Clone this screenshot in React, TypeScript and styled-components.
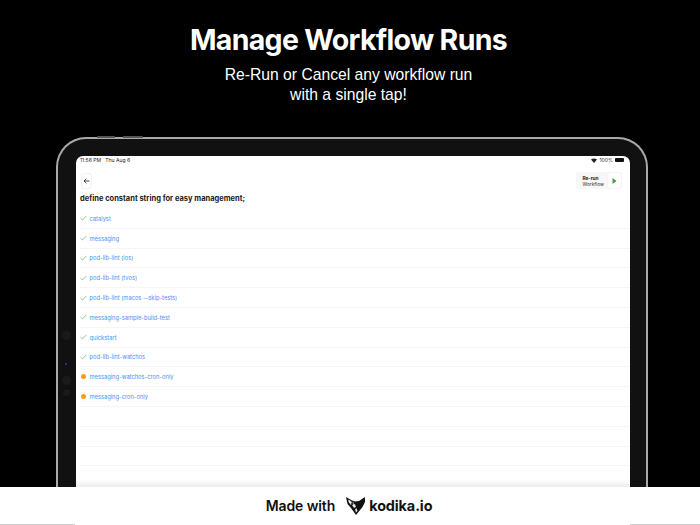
import React from "react";
import styled, { createGlobalStyle } from "styled-components";

const Global = createGlobalStyle`
  html, body { margin: 0; padding: 0; background: #000; }
  body { width: 700px; height: 525px; overflow: hidden; font-family: Inter, "Liberation Sans", sans-serif; }
`;
const Page = styled.div`
  width: 700px; height: 525px; display: flex; flex-direction: column; overflow: hidden;
`;
const Stage = styled.section`
  flex: 0 0 487px; height: 487px; background: #000; display: flex; flex-direction: column; align-items: center; overflow: hidden;
`;
const Headline = styled.h1`
  margin: 22px 3px 0 0; font: 700 28.5px/36px Inter, "Liberation Sans", sans-serif; color: #fff; letter-spacing: -0.67px;
`;
const Sub = styled.p`
  margin: 7px 3px 0 0; font: 400 15.7px/19.5px "Liberation Sans", Arial, sans-serif; color: #fff; text-align: center;
`;
const Device = styled.div`
  position: relative; margin: 33px 0 0 4px; width: 592px; flex: 1; min-height: 0; box-sizing: border-box;
  background: #111; border: solid #a9a9a9; border-width: 2px 2px 0; border-radius: 30px 30px 0 0;
  padding: 17px 16px 0 18px; display: flex;
`;
const SideButton = styled.span<{ $left: number; $width: number }>`
  position: absolute; top: -3px; left: ${p => p.$left}px; width: ${p => p.$width}px; height: 2px;
  background: #555; border-radius: 1px 1px 0 0;
`;
const Dot = styled.span<{ $top: number; $size: number; $color: string }>`
  position: absolute; left: ${p => 7 - p.$size / 2 + 1}px; top: ${p => p.$top}px; width: ${p => p.$size}px; height: ${p => p.$size}px;
  border-radius: 50%; background: ${p => p.$color};
`;
const Screen = styled.div`
  flex: 1; min-width: 0; background: #fff; border-radius: 7px 7px 0 0; display: flex; flex-direction: column; overflow: hidden; position: relative;
`;
const StatusBar = styled.div`
  display: flex; justify-content: space-between; align-items: center; height: 8px; padding: 0 6px 0 4px;
  font: 400 5.1px/8px Inter, "Liberation Sans", sans-serif; color: #222;
`;
const StatusGroup = styled.div`
  display: flex; align-items: center; gap: 2px;
  &:first-child { gap: 4px; }
`;
const Battery = styled.span`
  display: inline-block; width: 9px; height: 4px; background: #111; border-radius: 1px;
`;
const Toolbar = styled.div`
  display: flex; justify-content: space-between; align-items: center; padding: 8px 8px 0 5px;
`;
const BackButton = styled.button`
  width: 11px; height: 16px; padding: 0; border: 1px solid #f2f2f2; border-radius: 3px; background: #fff;
  display: flex; align-items: center; justify-content: center;
`;
const RerunGroup = styled.div`
  display: flex; align-items: center; height: 17px; background: #f7f7f7; border-radius: 3px; padding: 0 1px 0 6px; gap: 4px;
`;
const RerunLabel = styled.div`
  font: 400 4.8px/6px Inter, "Liberation Sans", sans-serif; color: #333;
  b { display: block; font-weight: 700; color: #222; }
`;
const PlayButton = styled.span`
  width: 13px; height: 15px; background: #fff; border-radius: 3px; box-shadow: 0 0 2px #0000000d; display: flex; align-items: center; justify-content: center;
`;
const Title = styled.h2`
  margin: 4px 0 0; padding-left: 4px; font: 700 7.5px/12px Inter, "Liberation Sans", sans-serif; color: #1a1a1a;
`;
const List = styled.ul`
  list-style: none; margin: 4px 0 0; padding: 0;
`;
const Row = styled.li`
  height: 19.8px; box-sizing: border-box; margin-left: 4px; border-bottom: 1px solid #f5f5f5;
  display: flex; align-items: center; gap: 2.5px;
`;
const StatusSlot = styled.span`
  width: 7px; display: flex; justify-content: center; flex: none;
`;
const Pending = styled.span`
  width: 5px; height: 5px; border-radius: 50%; background: #fb9b14;
`;
const JobName = styled.a`
  font: 400 5.75px/9px Inter, "Liberation Sans", sans-serif; color: #4d8df5;
`;
const Fade = styled.div`
  position: absolute; left: 0; right: 0; bottom: 0; height: 8px; background: linear-gradient(#fff0, #eee);
`;
const Footer = styled.footer`
  flex: 1; background: #fff; display: flex; align-items: center; justify-content: center; gap: 11px; padding-right: 2px; position: relative;
`;
const Made = styled.span`
  font: 600 14px/18px Inter, "Liberation Sans", sans-serif; color: #111; letter-spacing: -0.1px;
`;
const Brand = styled.span`
  display: flex; align-items: center; gap: 3px; font: 700 14.4px/18px Inter, "Liberation Sans", sans-serif; color: #111; letter-spacing: -0.1px;
`;
const EdgeMark = styled.span<{ $side: "left" | "right"; $width: number }>`
  position: absolute; bottom: 0; ${p => p.$side}: 0; width: ${p => p.$width}px; height: 1px; background: #ccc;
`;

const Check = () => (
  <svg width="7" height="6" viewBox="0 0 7 6" fill="none"><path d="M.6 3.2 2.500 5 6.400.8" stroke="#7fb27f" strokeWidth=".8" /></svg>
);
const Back = () => (
  <svg width="7" height="6" viewBox="0 0 7 6" fill="none"><path d="M6.500 3H1M3.400.7 1 3l2.400 2.300" stroke="#222" strokeWidth=".8" /></svg>
);
const Play = () => (
  <svg width="5" height="6" viewBox="0 0 5 6"><path d="M.5 0 4.500 3 .5 6z" fill="#4f9a45" /></svg>
);
const Wifi = () => (
  <svg width="6" height="5" viewBox="0 0 6 5"><path d="M0 1.600C1.700.1 4.300.1 6 1.600L3 5z" fill="#222" /></svg>
);
const Fox = () => (
  <svg width="20" height="18" viewBox="0 0 20 18">
    <path d="M0 0 6 3.500 9 4.500 13 4 19 0 19 5 16.500 10 10 18 5 11 1.500 7z" fill="#111" />
    <path d="M2 2.500 6 5 5 7 3 6zM6 8l3-1 1 3-2 1zM10.500 11l1 3-1.500 1.500-1-3z" fill="#ddd" />
    <path d="M3.500 3 5 8M7 5l1 5" stroke="#fff" strokeWidth=".6" />
  </svg>
);

const jobs: [string, boolean][] = [
  ["catalyst", true], ["messaging", true], ["pod-lib-lint (ios)", true], ["pod-lib-lint (tvos)", true],
  ["pod-lib-lint (macos --skip-tests)", true], ["messaging-sample-build-test", true], ["quickstart", true],
  ["pod-lib-lint-watchos", true], ["messaging-watchos-cron-only", false], ["messaging-cron-only", false],
  ["", false], ["", false], ["", false], ["", false],
];

export default function App() {
  return (
    <Page>
      <Global />
      <Stage>
        <Headline>Manage Workflow Runs</Headline>
        <Sub>Re-Run or Cancel any workflow run<br />with a single tap!</Sub>
        <Device>
          <SideButton $left={39} $width={18} />
          <SideButton $left={65} $width={20} />
          <Dot $top={192} $size={9} $color="#1a1a1a" />
          <Dot $top={224} $size={2} $color="#254a80" />
          <Dot $top={237} $size={9} $color="#1a1a1a" />
          <Dot $top={250} $size={7} $color="#1a1a1a" />
          <Screen>
            <StatusBar>
              <StatusGroup><span>11:56 PM</span><span>Thu Aug 6</span></StatusGroup>
              <StatusGroup><Wifi /><span>100%</span><Battery /></StatusGroup>
            </StatusBar>
            <Toolbar>
              <BackButton aria-label="Back"><Back /></BackButton>
              <RerunGroup>
                <RerunLabel><b>Re-run</b>Workflow</RerunLabel>
                <PlayButton><Play /></PlayButton>
              </RerunGroup>
            </Toolbar>
            <Title>define constant string for easy management;</Title>
            <List>
              {jobs.map(([name, done], i) => (
                <Row key={i}>
                  {name && <StatusSlot>{done ? <Check /> : <Pending />}</StatusSlot>}
                  {name && <JobName>{name}</JobName>}
                </Row>
              ))}
            </List>
            <Fade />
          </Screen>
        </Device>
      </Stage>
      <Footer>
        <Made>Made with</Made>
        <Brand><Fox />kodika.io</Brand>
        <EdgeMark $side="left" $width={75} />
        <EdgeMark $side="right" $width={70} />
      </Footer>
    </Page>
  );
}
